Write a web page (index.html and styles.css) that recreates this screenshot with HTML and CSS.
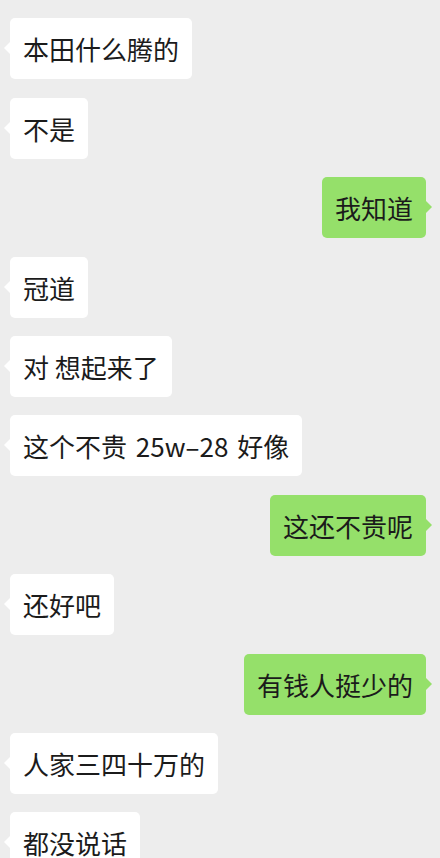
FILE: index.html
```html
<!DOCTYPE html>
<html lang="zh-CN">
<head>
<meta charset="utf-8">
<link rel="stylesheet" href="styles.css">
</head>
<body>
<div class="chat">
  <div class="row right stub"><div class="bubble green"></div></div>
  <div class="row left"><div class="bubble white">本田什么腾的</div></div>
  <div class="row left"><div class="bubble white">不是</div></div>
  <div class="row right"><div class="bubble green">我知道</div></div>
  <div class="row left"><div class="bubble white">冠道</div></div>
  <div class="row left"><div class="bubble white">对 想起来了</div></div>
  <div class="row left"><div class="bubble white wide">这个不贵 25w–28 好像</div></div>
  <div class="row right"><div class="bubble green">这还不贵呢</div></div>
  <div class="row left"><div class="bubble white">还好吧</div></div>
  <div class="row right"><div class="bubble green">有钱人挺少的</div></div>
  <div class="row left"><div class="bubble white">人家三四十万的</div></div>
  <div class="row left"><div class="bubble white">都没说话</div></div>
</div>
</body>
</html>
```

FILE: styles.css
```css
html, body {
  margin: 0;
  padding: 0;
  background: #ededed;
}

body {
  width: 440px;
  height: 858px;
  overflow: hidden;
  font-family: "Noto Sans CJK SC", "Noto Sans", sans-serif;
  color: #1b1b1b;
}

.chat {
  display: flex;
  flex-direction: column;
  gap: 18.4px;
  padding-top: 0;
}

.row {
  display: flex;
}

.row.left {
  justify-content: flex-start;
  padding-left: 10px;
}

.row.right {
  justify-content: flex-end;
  padding-right: 14px;
}

.row.stub {
  margin-top: -61px;
  padding-right: 18px;
}

.row.stub .bubble {
  width: 170px;
  opacity: 0.35;
}

.row.stub .bubble::after {
  display: none;
}

.bubble {
  position: relative;
  box-sizing: border-box;
  height: 61px;
  padding: 0 13px;
  font-size: 26px;
  line-height: 61px;
  border-radius: 5px;
  white-space: nowrap;
}

.bubble.wide {
  word-spacing: 3px;
}

.bubble.white {
  background: #ffffff;
}

.bubble.green {
  background: #95e06a;
}

.bubble::after {
  content: "";
  position: absolute;
  top: 24px;
  width: 0;
  height: 0;
  border-top: 6px solid transparent;
  border-bottom: 6px solid transparent;
}

.bubble.white::after {
  left: -6px;
  border-right: 6px solid #ffffff;
}

.bubble.green::after {
  right: -6px;
  border-left: 6px solid #95e06a;
}
```
